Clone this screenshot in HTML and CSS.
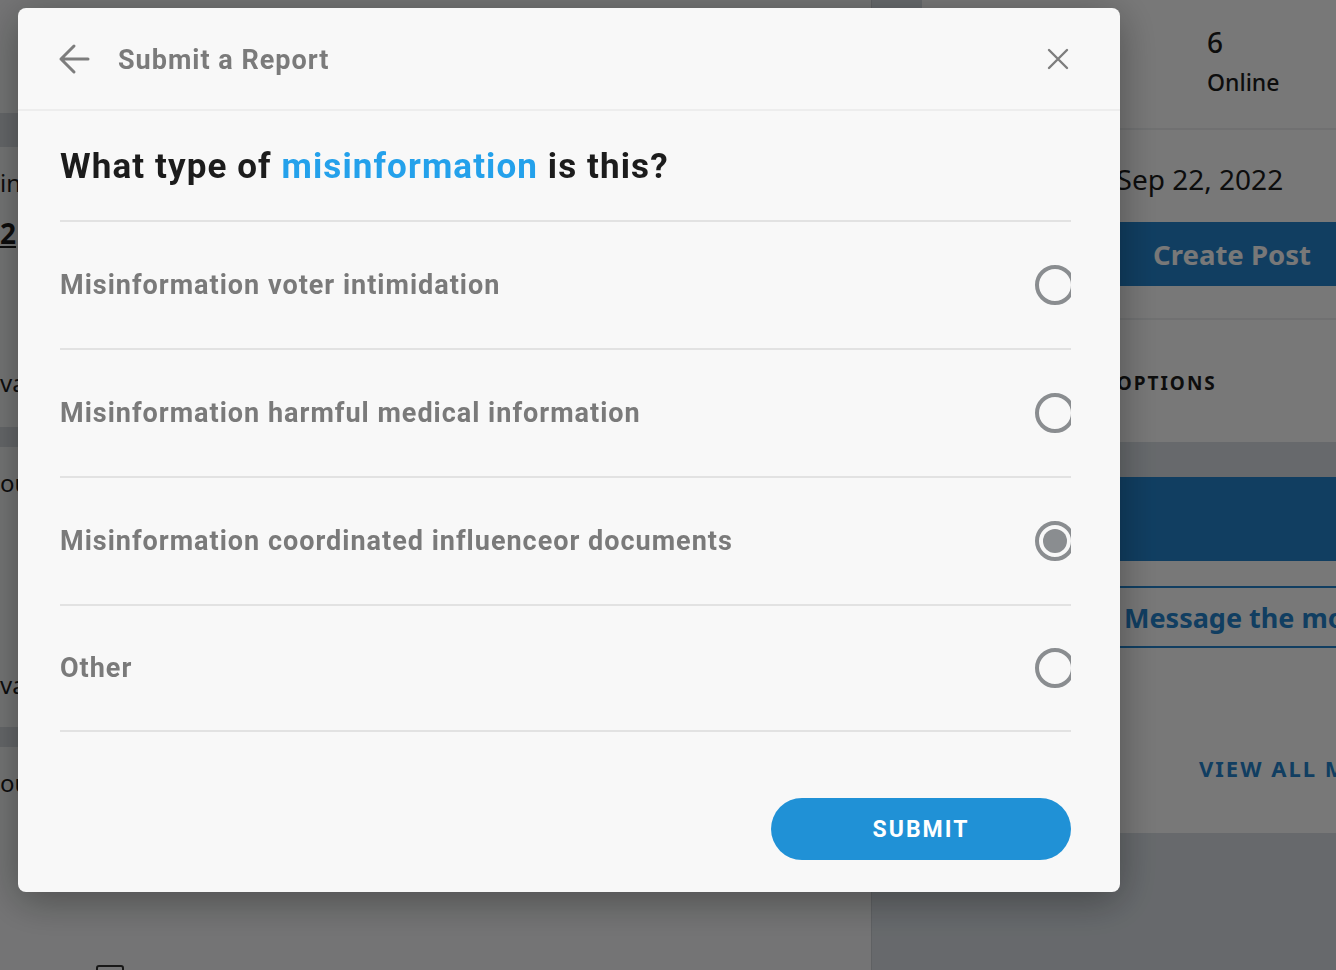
FILE: index.html
```html
<!DOCTYPE html>
<html lang="en">
<head>
<meta charset="utf-8">
<title>Submit a Report</title>
<link rel="stylesheet" href="styles.css">
</head>
<body>
<div class="page">
  <main class="feed">
    <div class="feed-top"></div>
    <div class="gap gap-first"></div>
    <article class="post post-1">
      <p class="post-line l1">information about the vote</p>
      <p class="post-line l2"><u>2</u></p>
      <p class="post-line l3">validated claims</p>
    </article>
    <div class="gap"></div>
    <article class="post post-2">
      <p class="post-line l1">out of context</p>
      <p class="post-line l3">validated claims</p>
    </article>
    <div class="gap"></div>
    <article class="post post-3">
      <p class="post-line l1">out of context</p>
      <span class="check"></span>
    </article>
  </main>
  <aside class="sidebar">
    <section class="card about">
      <div class="stats">
        <div class="stat"><div class="num">2</div><div class="lbl">Members</div></div>
        <div class="stat"><div class="num">6</div><div class="lbl">Online</div></div>
      </div>
      <div class="created">Created Sep 22, 2022</div>
      <div class="create-post">Create Post</div>
      <div class="options">COMMUNITY OPTIONS</div>
    </section>
    <section class="card mods">
      <div class="mods-head"></div>
      <div class="mods-body">
        <div class="msg-btn">Message the mods</div>
        <div class="view-all">VIEW ALL MODERATORS</div>
      </div>
    </section>
  </aside>
</div>

<div class="overlay">
  <div class="modal" role="dialog" aria-labelledby="modal-title">
    <header class="modal-head">
      <button class="icon-btn back" aria-label="Back">
        <svg width="32" height="32" viewBox="0 0 32 32"><path d="M30 16H3M16 3L3 16l13 13" fill="none" stroke="#7d7d7d" stroke-width="3" stroke-linecap="round" stroke-linejoin="round"/></svg>
      </button>
      <h2 id="modal-title" class="modal-title">Submit a Report</h2>
      <button class="icon-btn close" aria-label="Close">
        <svg width="24" height="24" viewBox="0 0 24 24"><path d="M3 3l18 18M21 3L3 21" fill="none" stroke="#7d7d7d" stroke-width="2.4" stroke-linecap="round"/></svg>
      </button>
    </header>
    <div class="modal-body">
      <h3 class="question">What type of <span class="accent">misinformation</span> is this?</h3>
      <ul class="options-list">
        <li class="option"><span class="opt-label">Misinformation voter intimidation</span><span class="radio"></span></li>
        <li class="option"><span class="opt-label">Misinformation harmful medical information</span><span class="radio"></span></li>
        <li class="option"><span class="opt-label">Misinformation coordinated influenceor documents</span><span class="radio checked"></span></li>
        <li class="option last"><span class="opt-label">Other</span><span class="radio"></span></li>
      </ul>
      <div class="actions">
        <button class="submit">SUBMIT</button>
      </div>
    </div>
  </div>
</div>
</body>
</html>
```

FILE: styles.css
```css
* { box-sizing: border-box; }
html, body { margin: 0; padding: 0; height: 100%; overflow: hidden; }
body { font-family: "Noto Sans", "Open Sans", sans-serif; background: #dae0e6; color: #1c1c1c; }

.page { display: flex; height: 970px; }

/* ---------- background feed ---------- */
.feed {
  width: 872px; flex: none; background: #f6f7f8; border-right: 1px solid #c9ced3;
  display: flex; flex-direction: column; overflow: hidden;
}
.feed-top { height: 113px; flex: none; }
.gap { height: 20px; background: #d5dadf; flex: none; }
.gap-first { height: 34px; }
.post { height: 280px; flex: none; padding: 0; }
.post-line { margin: 0; font-size: 24px; line-height: 32px; color: #1c1c1c; white-space: nowrap; }
.post-1 .l1 { padding-top: 20px; }
.post-1 .l2 { padding-top: 18px; font-weight: 700; font-size: 28px; }
.post-1 .l3 { padding-top: 118px; }
.post-2 .l1, .post-3 .l1 { padding-top: 20px; }
.post-2 .l3 { padding-top: 170px; }
.check { display: block; margin: 166px 0 0 96px; width: 28px; height: 20px; border: 2px solid #333; border-radius: 3px; }

.sidebar { flex: 1; padding-left: 50px; display: flex; flex-direction: column; gap: 35px; overflow: hidden; }
.card { background: #fff; width: 640px; flex: none; }
.about { height: 442px; display: flex; flex-direction: column; }
.stats { height: 130px; border-bottom: 2px solid #edeff1; display: flex; padding: 24px 0 0 0; }
.stat { width: 285px; }
.stat + .stat { width: auto; }
.num { font-size: 28px; line-height: 36px; font-weight: 500; }
.lbl { font-size: 23px; line-height: 32px; font-weight: 500; margin-top: 6px; }
.created { height: 92px; display: flex; align-items: center; font-size: 28px; padding: 6px 0 0 84px; }
.create-post {
  height: 64px; background: #2485cf; color: #fff; font-weight: 700; font-size: 27.5px;
  display: flex; align-items: center; justify-content: center; width: 620px; flex: none;
}
.options {
  margin-top: 32px; border-top: 2px solid #edeff1; flex: 1; display: flex; align-items: center;
  font-weight: 700; font-size: 19px; letter-spacing: 2px; padding: 4px 0 0 47px;
}
.mods { height: 356px; display: flex; flex-direction: column; }
.mods-head { height: 84px; background: #2485cf; }
.mods-body { flex: 1; padding-top: 25px; }
.msg-btn {
  height: 62px; border: 2px solid #2485cf; border-radius: 31px; color: #2485cf;
  font-weight: 700; font-size: 27px; display: flex; align-items: center; padding-left: 200px; width: 600px;
  white-space: nowrap;
}
.view-all {
  margin-top: 105px; padding-left: 277px; color: #2485cf; font-weight: 700; font-size: 22px; letter-spacing: 2px;
  white-space: nowrap;
}

/* ---------- overlay + modal ---------- */
.overlay {
  position: fixed; inset: 0; background: rgba(0, 0, 0, 0.53);
  padding: 8px 0 0 18px;
}
.modal {
  width: 1102px; height: 884px; background: #f8f8f8; border-radius: 8px;
  box-shadow: 0 8px 40px rgba(0, 0, 0, 0.35);
  font-family: Roboto, "Noto Sans", sans-serif;
  display: flex; flex-direction: column;
}
.modal-head {
  height: 103px; flex: none; border-bottom: 2px solid #ededed;
  display: flex; align-items: center; padding: 0 50px 0 40px;
}
.icon-btn { background: none; border: 0; padding: 0; margin: 0; cursor: pointer; display: flex; }
.back { margin-right: 28px; }
.modal-title { margin: 0; font-size: 27px; font-weight: 700; color: #7b7b7b; flex: 1; letter-spacing: 1px; padding-top: 2px; }
.modal-body { flex: 1; padding: 0 49px 0 42px; display: flex; flex-direction: column; }
.question {
  margin: 0; height: 109px; display: flex; align-items: center; font-size: 35px; font-weight: 700;
  color: #1c1c1c; white-space: pre; padding-top: 2px; letter-spacing: 1.1px;
}
.accent { color: #24a1eb; }
.options-list { list-style: none; margin: 0; padding: 0; border-top: 2px solid #e2e2e2; }
.option {
  height: 128px; border-bottom: 2px solid #e2e2e2; display: flex; align-items: center;
  justify-content: space-between; overflow: hidden;
}
.option.last { height: 126px; }
.opt-label { font-size: 27px; font-weight: 700; color: #7a7a7a; letter-spacing: 1px; }
.radio {
  width: 40px; height: 40px; border: 4px solid #8a8d90; border-radius: 50%; flex: none;
  margin-right: -4px; display: flex; align-items: center; justify-content: center;
}
.radio.checked::after { content: ""; width: 24px; height: 24px; border-radius: 50%; background: #8a8d90; }
.actions { display: flex; justify-content: flex-end; padding-top: 66px; }
.submit {
  width: 300px; height: 62px; border: 0; border-radius: 31px; background: #2091d6; color: #fff;
  font-family: Roboto, "Noto Sans", sans-serif; font-weight: 700; font-size: 23px; letter-spacing: 2px;
}
```
